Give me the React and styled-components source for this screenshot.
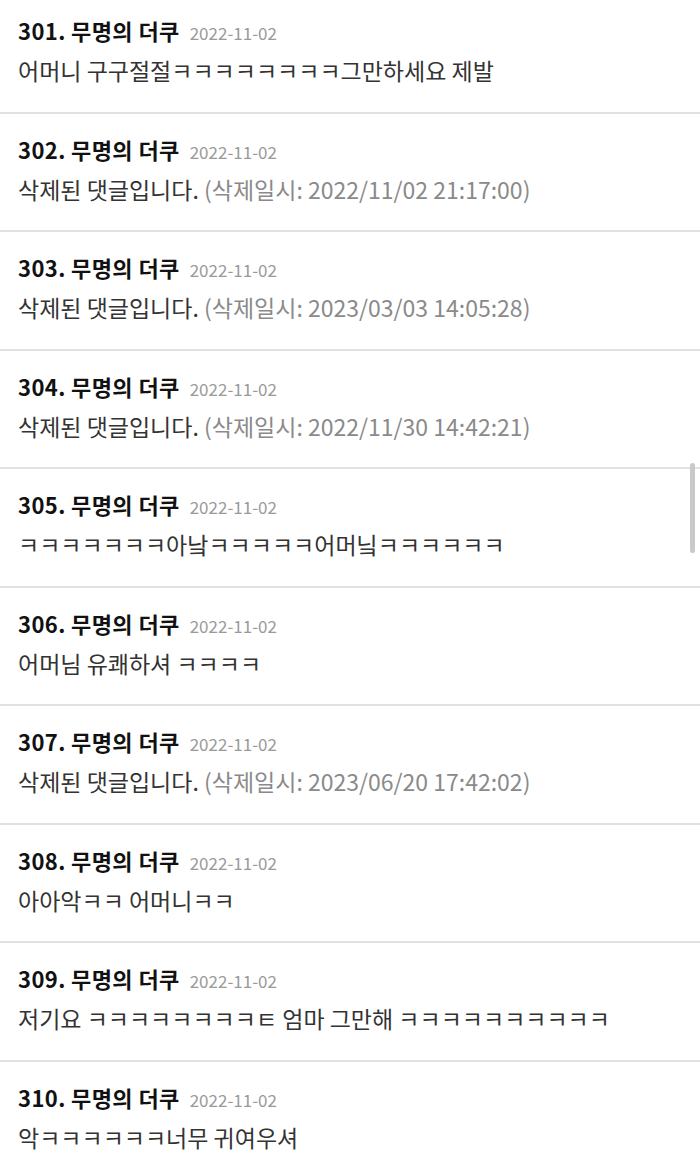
import React from "react";
import styled, { createGlobalStyle } from "styled-components";

const Global = createGlobalStyle`
  html, body { margin: 0; padding: 0; background: #fff; }
  body { font-family: "Noto Sans CJK KR", "Noto Sans", sans-serif; overflow: hidden; }
`;

const Page = styled.div`
  position: relative;
  width: 700px;
  height: 1170px;
  overflow: hidden;
  background: #fff;
`;

const List = styled.ul`
  list-style: none;
  margin: -5px 0 0;
  padding: 0;
`;

const Row = styled.li`
  box-sizing: border-box;
  height: 118.5px;
  padding: 21px 18px 0;
  border-bottom: 2px solid #e1e1e1;
  display: flex;
  flex-direction: column;
  gap: 11px;
`;

const Head = styled.div`
  display: flex;
  align-items: baseline;
  gap: 10px;
  height: 28px;
  line-height: 28px;
`;

const Name = styled.span`
  font-size: 22px;
  font-weight: 700;
  color: #111;
  letter-spacing: 0.4px;
`;

const Date = styled.span`
  font-size: 17px;
  color: #9a9a9a;
`;

const Body = styled.div`
  font-size: 23px;
  line-height: 30px;
  color: #333;
  white-space: nowrap;
`;

const Deleted = styled.span`
  color: #8a8a8a;
`;

const Scrollbar = styled.div`
  position: absolute;
  right: 5px;
  top: 463px;
  width: 5px;
  height: 90px;
  border-radius: 3px;
  background: #c9c9c9;
`;

const comments = [
  { n: 301, text: "어머니 구구절절ㅋㅋㅋㅋㅋㅋㅋㅋ그만하세요 제발" },
  { n: 302, deleted: "2022/11/02 21:17:00" },
  { n: 303, deleted: "2023/03/03 14:05:28" },
  { n: 304, deleted: "2022/11/30 14:42:21" },
  { n: 305, text: "ㅋㅋㅋㅋㅋㅋㅋ아낰ㅋㅋㅋㅋㅋ어머닠ㅋㅋㅋㅋㅋㅋ" },
  { n: 306, text: "어머님 유쾌하셔 ㅋㅋㅋㅋ" },
  { n: 307, deleted: "2023/06/20 17:42:02" },
  { n: 308, text: "아아악ㅋㅋ 어머니ㅋㅋ" },
  { n: 309, text: "저기요 ㅋㅋㅋㅋㅋㅋㅋㅋㅌ 엄마 그만해 ㅋㅋㅋㅋㅋㅋㅋㅋㅋㅋ" },
  { n: 310, text: "악ㅋㅋㅋㅋㅋㅋ너무 귀여우셔" },
];

export default function App() {
  return (
    <Page>
      <Global />
      <List>
        {comments.map((c) => (
          <Row key={c.n}>
            <Head>
              <Name>{c.n}. 무명의 더쿠</Name>
              <Date>2022-11-02</Date>
            </Head>
            <Body>
              {c.deleted ? (
                <>
                  삭제된 댓글입니다. <Deleted>(삭제일시: {c.deleted})</Deleted>
                </>
              ) : (
                c.text
              )}
            </Body>
          </Row>
        ))}
      </List>
      <Scrollbar />
    </Page>
  );
}
